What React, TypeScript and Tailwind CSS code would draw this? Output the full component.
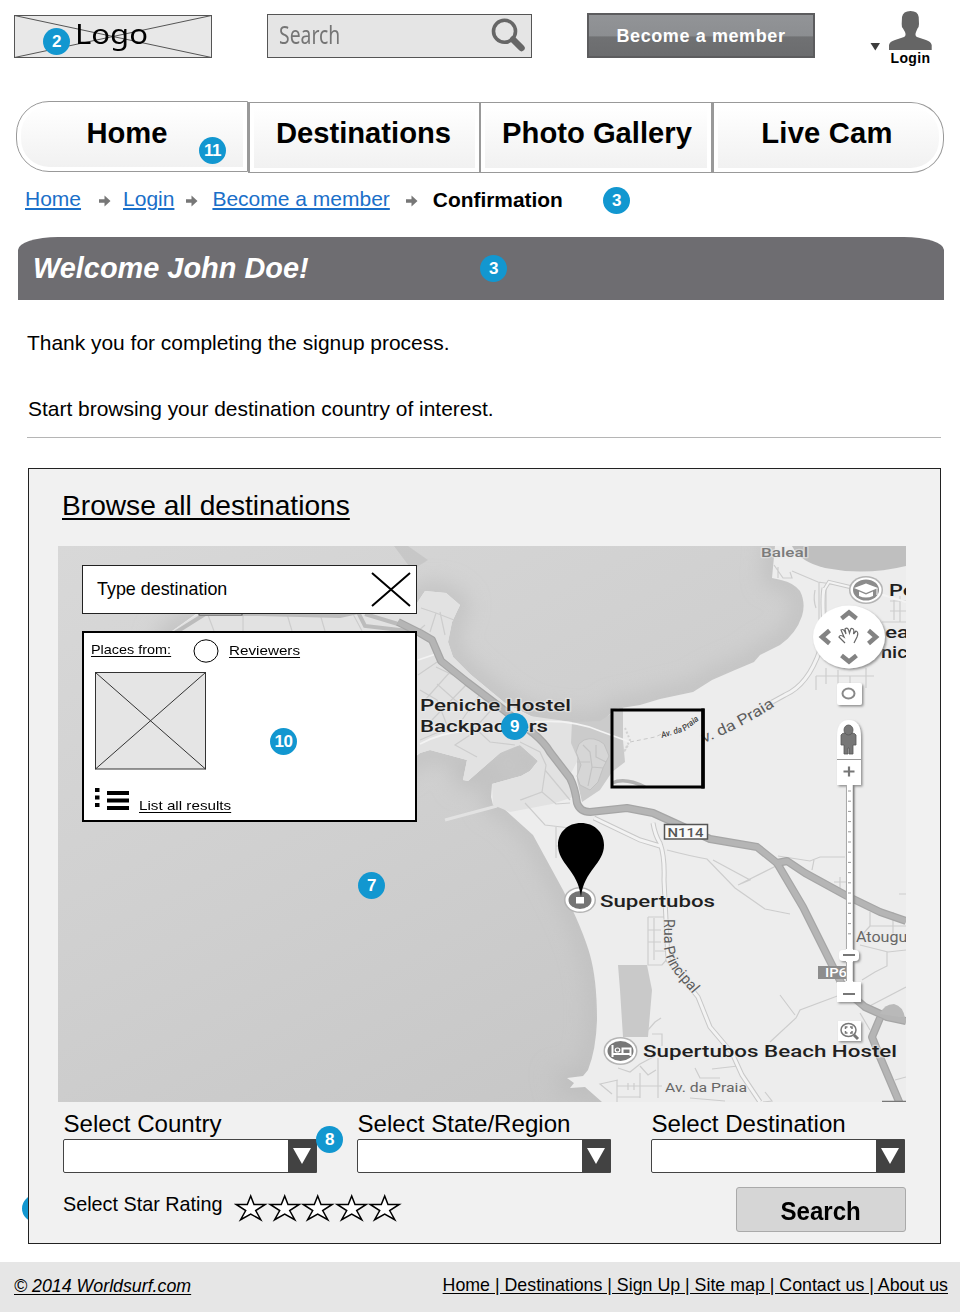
import React from "react";

function Badge({ n, className }: { n?: string; className: string }) {
  return (
    <span
      className={`absolute flex h-[27px] w-[27px] items-center justify-center rounded-full bg-[#1297d0] text-[17px] font-bold leading-none tracking-[-0.5px] text-white ${className}`}
    >
      {n}
    </span>
  );
}

function Header() {
  return (
    <header className="flex h-[101px] items-start">
      <div className="relative ml-[14px] mt-[15px] h-[43px] w-[198px] bg-[#e8e8e8]">
        <svg className="absolute inset-0" width="198" height="43" fill="none" stroke="#555" strokeWidth="1">
          <rect x="0.5" y="0.5" width="197" height="42" />
          <path d="M0.5 0.5L197.5 42.5M0.5 42.5L197.5 0.5" />
        </svg>
        <span className="absolute left-[61px] top-[1px] origin-left scale-x-[1.15] font-['Noto_Sans',sans-serif] text-[27px] leading-[36px] text-black">
          Logo
        </span>
        <Badge n="2" className="left-[29px] top-[13px]" />
      </div>
      <div className="ml-[55px] mt-[14px] flex h-[44px] w-[265px] items-center justify-between border border-[#555] bg-[#e5e5e5] pl-[11px] pr-[5px]">
        <span className="origin-left scale-x-[0.79] pb-[3px] font-['Noto_Sans',sans-serif] text-[24.5px] leading-[38px] text-[#757575]">
          Search
        </span>
        <svg width="36" height="36" viewBox="0 0 36 36" fill="none" stroke="#666">
          <circle cx="14.5" cy="13.3" r="11" strokeWidth="3.6" />
          <path d="M23 21.5L31.5 30" strokeWidth="6.5" strokeLinecap="round" />
        </svg>
      </div>
      <button className="ml-[55px] mt-[13px] h-[45px] w-[228px] border-2 border-[#5c5c5e] bg-[linear-gradient(#929497_0%,#8c8e91_50%,#707173_54%,#6b6c6e_100%)] pt-[2px] text-[18px] font-bold leading-[39px] tracking-[0.6px] text-white">
        Become a member
      </button>
      <div className="ml-[55px] mt-[11px] flex items-start">
        <svg className="mt-[32px]" width="11" height="8">
          <path d="M0.5 0H10L5.3 7.5Z" fill="#3d3d3d" />
        </svg>
        <div className="ml-[8px] flex w-[43px] flex-col items-center">
          <svg width="43" height="39" fill="#656565">
            <path d="M0 39V34Q0.5 30.5 6 29L15 26Q17.5 24.5 16 21L14 17.500Q12.500 16 12.700 13L13 6Q14 0 21.500 0Q29 0 29.700 6L30 13Q30 16 28.500 17.500L27 21Q25.500 24.500 28 26L37 29Q42 30.500 42.700 34V39Z" />
          </svg>
          <span className="text-[14px] font-bold leading-[16px] tracking-[0.4px] text-black">Login</span>
        </div>
      </div>
    </header>
  );
}

function Nav() {
  const inner = "flex h-full w-full justify-center bg-linear-to-b from-white to-[#f1f1f1] text-[29.2px] font-bold leading-[29px] text-black";
  return (
    <nav className="relative ml-[16px] flex h-[72px] w-[928px]">
      <a className="h-[71px] w-[232px] rounded-l-[33px] border border-[#999] p-[4px]">
        <span className={`${inner} rounded-l-[28px] pl-0 pr-[10px] pt-[13px]`}>Home</span>
      </a>
      <a className="mt-px h-[71px] w-[232px] border border-l-2 border-[#999] p-[4px]">
        <span className={`${inner} pr-[2px] pt-[12px]`}>Destinations</span>
      </a>
      <a className="mt-px h-[71px] w-[232px] border border-[#999] p-[4px]">
        <span className={`${inner} whitespace-nowrap pl-[2px] pt-[12px]`}>Photo Gallery</span>
      </a>
      <a className="mt-px h-[71px] w-[232px] rounded-r-[33px] border border-l-2 border-[#999] p-[4px]">
        <span className={`${inner} rounded-r-[28px] pr-[3px] pt-[12px]`}>
          <span className="whitespace-nowrap tracking-[0.2px]">Live Cam</span>
        </span>
      </a>
      <Badge n="11" className="left-[183px] top-[36px]" />
    </nav>
  );
}

function Arrow({ className }: { className: string }) {
  return (
    <svg className={className} width="12" height="12" fill="#777">
      <path d="M0 4.300H5.500V0.500L11.500 6L5.500 11.500V7.800H0Z" />
    </svg>
  );
}

function Breadcrumb() {
  const link = "text-[#1a6fc9] underline decoration-[1.5px] underline-offset-[2px]";
  return (
    <div className="relative mt-[14px] flex h-[50px] items-start pl-[25px] text-[21px] leading-[24px]">
      <a className={link}>Home</a>
      <Arrow className="ml-[18px] mt-[8px]" />
      <a className={`${link} ml-[12px]`}>Login</a>
      <Arrow className="ml-[12px] mt-[8px]" />
      <a className={`${link} ml-[14px]`}>Become a member</a>
      <Arrow className="ml-[16px] mt-[8px]" />
      <span className="ml-[15px] mt-px text-[20.900px] font-bold text-black">Confirmation</span>
      <Badge n="3" className="left-[603px] top-0" />
    </div>
  );
}

const HALO = {
  paintOrder: "stroke" as const,
  stroke: "#ececec",
  strokeOpacity: 0.55,
  strokeWidth: 2.5,
  strokeLinejoin: "round" as const,
};

function Label({ x, y, w, size = 16, weight = 500, fill = "#1f1f1f", children }: {
  x: number; y: number; w: number; size?: number; weight?: number; fill?: string; children: string;
}) {
  return (
    <text x={x} y={y} textLength={w} lengthAdjust="spacingAndGlyphs" fontSize={size} fontWeight={weight} fill={fill} {...HALO}>
      {children}
    </text>
  );
}

function MapDrawing() {
  const ticks = Array.from({ length: 15 }, (_, i) => 791 + i * 10.2);
  return (
    <svg className="absolute inset-0 font-[Roboto,sans-serif]" width="848" height="556" viewBox="58 546 848 556">
      <defs>
        <linearGradient id="sea" x1="0" y1="0" x2="0.8" y2="1">
          <stop offset="0" stopColor="#d8d8d8" />
          <stop offset="0.5" stopColor="#cfcfcf" />
          <stop offset="1" stopColor="#c5c5c5" />
        </linearGradient>
        <filter id="soft" x="-10%" y="-10%" width="120%" height="120%"><feGaussianBlur stdDeviation="11" /></filter>
        <filter id="shadow" x="-20%" y="-20%" width="150%" height="150%">
          <feDropShadow dx="1.5" dy="1.5" stdDeviation="0.8" floodColor="#777" floodOpacity="0.8" />
        </filter>
        <path id="land" d="M775 546L772 578L781 580Q794 583 800 591Q806 603 802 616Q796 634 780 645L760 655L754 662L735 670L712 680L693 692L660 699L640 705L615 709L600 724L572 722L535 718L505 703L470 674L453 657L448 642L452 622L460 605L446 593L425 591L415 606L400 602L380 609L340 613L200 611L165 636L400 770L420 753L430 750L467 760L463 780L468 781L500 753L510 747L520 745L538 761L530 771L521 776L492 784L491 797L493 805L503 808L533 835L563 890Q583 930 590 955Q597 980 597 1020Q596 1050 588 1070L583 1076L567 1078L574 1083L570 1088L585 1087L602 1102H906V546Z" />
      </defs>
      <rect x="58" y="546" width="848" height="556" fill="url(#sea)" />
      <use href="#land" fill="none" stroke="#bdbdbd" strokeWidth="14" filter="url(#soft)" />
      <path d="M394 546L412 570L428 560L408 546Z" fill="#c2c2c2" opacity="0.7" />
      <use href="#land" fill="#ededed" />
      <path d="M200 612L165 636L400 765L420 753L430 750L467 760L463 780L468 781L500 753L520 745L538 761L530 771L521 776L492 784L493 805L510 812L552 804L576 796L570 775L578 760L572 722L530 716L505 703L470 674L453 657L448 642L452 622L460 605L446 593L425 591L415 606L400 602L380 609L340 613Z" fill="#e2e2e2" />
      <path d="M792 546Q800 562 825 568Q865 576 906 566V546Z" fill="#bfbfbf" />
      <path d="M572 722L600 721L623 706V740L625 762L612 772L600 790L582 802L577 780L577 757L571 743Z" fill="#cbcbcb" />
      <path d="M579 744L584 740Q594 736 604 744L609 756L603 768L598 782L590 790L580 785L577 776L581 765L576 752Z" fill="#d6d6d6" stroke="#c1c1c1" />
      <path d="M583 745L590 752L592 767L588 786M592 767L603 768M577 762H590M596 745V757L606 762" fill="none" stroke="#c3c3c3" strokeWidth="1.200" />
      <path d="M612 783Q625 777 645 787" fill="none" stroke="#b2b2b2" strokeWidth="3.500" />
      <path d="M618 965H647L652 990L648 1037H623L620 990Z" fill="#c9c9c9" />
      <path d="M445 820L497 806" stroke="#e2e2e2" strokeWidth="3" />

      <g fill="none" stroke="#cdcdcd" strokeWidth="1.200">
        <path d="M421 608L436 613L454 620M436 613L430 632M440 612L445 635M425 625L417 632M440 660L418 675M450 672L425 700M467 684L430 722M455 676L436 667M480 694L462 720M437 684L455 700L470 712M420 690L437 700L447 725M493 708L475 728L490 742L515 745M420 740L448 728M470 735L455 745L477 757M520 742L540 752L546 765L542 792L520 800M545 770L570 800M521 800L542 792L556 804L570 803M525 803L545 825L570 828M556 826V858M556 846H562" />
        <path d="M208 615L214 631M243 614V631M287 614L292 631M320 614L325 631M353 614L362 631" />
        <path d="M774 565L783 578H792L790 572M778 567V578M792 571L818 582L846 586M815 590Q813 600 816 608M819 582V622M826 586V612M890 601H906M890 611H906M894 600V620M900 596V622M882 622H906M816 676H874M826 668V684M838 670V690M850 676V686M866 668V688M816 676V690" />
        <path d="M667 850Q690 856 707 859L735 888L765 909L790 914M713 860L750 880L738 885M740 884L776 866M778 856L810 861L820 857H845M812 870L814 860" />
        <path d="M834 882H846M840 877V890M870 912V926H906M893 912V936M870 926L862 935M899 894H906M860 945L888 952L906 950M887 952V966L875 972L862 980M848 992L800 1010L796 1018L770 1042M780 995L795 1015M862 1010L906 987M860 1013L870 1030M895 1080L906 1077M695 1068L700 1078H720M712 1069L738 1066" />
        <path d="M648 917H665M648 917V965H662L668 958M654 918V960M648 930H661M648 942H661M655 951H668M648 1030L655 1022L661 1018M652 1034H662V1046M618 1068L630 1072L640 1064L655 1056M618 1080L600 1084L612 1094M617 1080V1102M640 1073V1098M617 1086H662M628 1083V1090M634 1083V1090M658 1058V1098M617 1097H640M640 1066L648 1075L656 1070M690 1098L725 1101M765 1092L772 1101L763 1102" />
      </g>
      <g fill="none" stroke="#c8c8c8" strokeWidth="5">
        <path d="M653 823Q655 835 660 843Q665 857 664 880L668 960L698 997L710 1027L732 1053L742 1075L760 1102M594 818L640 840L660 846M824 588Q822 600 824 625L820 650Q808 685 785 695L765 706" />
        <path d="M824 590L829 582L850 587" strokeWidth="4" />
      </g>
      <g fill="none" stroke="#f3f3f3" strokeWidth="3">
        <path d="M653 823Q655 835 660 843Q665 857 664 880L668 960L698 997L710 1027L732 1053L742 1075L760 1102M594 818L640 840L660 846M824 588Q822 600 824 625L820 650Q808 685 785 695L765 706" />
        <path d="M824 590L829 582L850 587" strokeWidth="2" />
        <path d="M535 722Q572 719 600 731L630 742M418 660L436 654M420 744Q440 733 465 731" strokeWidth="1.800" />
        <path d="M880 594L906 602" strokeWidth="2" />
      </g>
      <path d="M630 742L655 737L664 733" fill="none" stroke="#c8c8c8" strokeDasharray="4 3" />
      <path d="M625 728L630 740L624 752L628 745" fill="none" stroke="#d2d2d2" strokeDasharray="2 2" strokeWidth="2" />
      <path d="M170 636L205 614H260L340 616L358 612L365 626L417 632M365 614L398 624" fill="none" stroke="#bcbcbc" strokeWidth="4" />
      <g fill="none" stroke="#a6a6a6" strokeWidth="8" strokeLinejoin="round">
        <path d="M398 622L420 633L432 640L441 661L467 682L500 707L533 733Q545 743 550 752L570 778Q575 788 577 803Q580 812 590 812L627 808L653 813L710 839L757 847L777 863L787 861L805 873L847 896L880 912L906 921" />
        <path d="M777 863L803 907L833 967L845 990L865 1007L887 1017L906 1021M880 1018L872 1037L880 1057L900 1104" />
      </g>
      <g fill="none" stroke="#b5b5b5" strokeWidth="5.500" strokeLinejoin="round">
        <path d="M398 622L420 633L432 640L441 661L467 682L500 707L533 733Q545 743 550 752L570 778Q575 788 577 803Q580 812 590 812L627 808L653 813L710 839L757 847L777 863L787 861L805 873L847 896L880 912L906 921" />
        <path d="M777 863L803 907L833 967L845 990L865 1007L887 1017L906 1021M880 1018L872 1037L880 1057L900 1104" />
      </g>
      <path d="M880 1014Q884 1004 894 1004Q903 1006 905 1018Z" fill="#b9b9b9" />
      <path d="M882 1101.500H906" stroke="#777" strokeWidth="1.500" />
      <rect x="199" y="606" width="43" height="9" fill="#fff" stroke="#555" />

      <Label x={761} y={557} w={47} size={13.5} weight={500} fill="#7b7b7b">Baleal</Label>
      <Label x={420} y={710.5} w={151}>Peniche Hostel</Label>
      <Label x={420} y={731.5} w={128}>Backpackers</Label>
      <Label x={600} y={906.5} w={115}>Supertubos</Label>
      <Label x={643} y={1057} w={254}>Supertubos Beach Hostel</Label>
      <Label x={856} y={941.5} w={64} size={14} weight={400} fill="#666">Atouguia</Label>
      <Label x={665} y={1092} w={82} size={12.5} weight={400} fill="#666">Av. da Praia</Label>
      <Label x={889} y={596} w={78}>Peniche</Label>
      <Label x={885} y={637.500} w={30}>eal</Label>
      <Label x={881} y={658} w={38}>nico</Label>
      <path id="praia" d="M704 743Q744 727 778 704" fill="none" />
      <text fontSize="15" fill="#5c5c5c" {...HALO}><textPath href="#praia" textLength="80" lengthAdjust="spacingAndGlyphs">v. da Praia</textPath></text>
      <path id="rua" d="M664 919V948Q667 966 679 978L698 1000" fill="none" />
      <text fontSize="15" fill="#5c5c5c" {...HALO}><textPath href="#rua" textLength="84" lengthAdjust="spacingAndGlyphs">Rua Principal</textPath></text>

      <rect x="664.500" y="824.500" width="43" height="14.500" fill="#fafafa" stroke="#555" strokeWidth="1.500" />
      <text x="667.500" y="836.500" textLength="36" lengthAdjust="spacingAndGlyphs" fontSize="12.500" fontWeight="500" fill="#555">N114</text>
      <rect x="818" y="966" width="32" height="13" fill="#8d8d8d" />
      <text x="825" y="977" textLength="22" lengthAdjust="spacingAndGlyphs" fontSize="12.500" fontWeight="500" fill="#fff">IP6</text>

      <g fill="#fff">
        <ellipse cx="866" cy="590" rx="17" ry="14" fill="#b4b4b4" />
        <ellipse cx="866" cy="590" rx="15.500" ry="12.500" />
        <ellipse cx="866" cy="590" rx="13" ry="10.500" fill="#8c8c8c" />
        <path d="M854 588L866 583.500L878 588L866 593ZM859 591.500L866 594.500L873 591.500V596Q866 599 859 596Z" />
        <path d="M877 588V595" stroke="#fff" />
        <ellipse cx="580" cy="900" rx="16" ry="13" fill="#b4b4b4" />
        <ellipse cx="580" cy="900" rx="14.500" ry="11.500" />
        <ellipse cx="580" cy="900" rx="11.500" ry="9" fill="#757575" />
        <rect x="576" y="897" width="8" height="6.500" />
        <ellipse cx="620.500" cy="1051" rx="17" ry="14" fill="#b4b4b4" />
        <ellipse cx="620.500" cy="1051" rx="15.500" ry="12.500" />
        <ellipse cx="620.500" cy="1051" rx="13" ry="10" fill="#787878" />
        <path d="M612.500 1045V1057M612.500 1054H630.500V1056M630.500 1054V1048.500H622.500V1053" fill="none" stroke="#fff" strokeWidth="2" />
        <ellipse cx="617.500" cy="1050" rx="2.300" ry="2" fill="none" stroke="#fff" strokeWidth="1.200" />
      </g>
      <path d="M581 823C568 823 558 832 558 845C558 864 578 870 581 897C584 870 604 864 604 845C604 832 594 823 581 823Z" />

      <g filter="url(#shadow)" fill="#fff">
        <ellipse cx="849" cy="637" rx="36" ry="31.500" />
        <rect x="837" y="683" width="25" height="22" rx="2" />
        <path d="M837 760V737Q837 720 849 720Q861 720 861 737V785H837Z" />
        <rect x="846" y="785" width="7" height="198" />
        <rect x="839" y="950" width="20" height="11" rx="4" />
        <rect x="837" y="982" width="24" height="20" />
        <rect x="838" y="1021" width="23" height="20" />
      </g>
      <path d="M841.500 618.500L849 612.500L856.500 618.500M841.500 655.500L849 661.500L856.500 655.500M829.500 630.500L822 637L829.500 643.500M868.500 630.500L876 637L868.500 643.500" fill="none" stroke="#838383" strokeWidth="4.500" />
      <path d="M845 643L839 637Q840 634 844 637L841 630Q844 628 846 634L845 629Q848 626 849.500 633L851 628.500Q855 628 853.500 634L856 631Q859 632 857 637L854 643" fill="#fff" stroke="#666" strokeWidth="1.200" />
      <ellipse cx="848.500" cy="693.500" rx="6" ry="5" fill="none" stroke="#888" strokeWidth="2" />
      <path d="M837 759.500H861" stroke="#999" />
      <g fill="#777" stroke="#555" strokeWidth="0.800">
        <path d="M841 735Q842 733 845 733H852Q855 733 856 735V745H853V754H849V748H848V754H844V745H841Z" />
        <ellipse cx="848.500" cy="730" rx="4.500" ry="5" />
      </g>
      <path d="M843.500 771.500H854.500M849 766.500V776.500M843 994H855" stroke="#777" strokeWidth="2.200" />
      <path d="M843 955H855" stroke="#777" strokeWidth="2" />
      {ticks.map((t) => <path key={t} d={`M848 ${t}h3`} stroke="#999" />)}
      <path d="M846.500 785V949M846.500 962V981" stroke="#aaa" />
      <path d="M853.500 785V949M853.500 962V981" stroke="#888" strokeWidth="1.500" />
      <g fill="none" stroke="#777" strokeWidth="1.500">
        <ellipse cx="848.500" cy="1030" rx="7.500" ry="6.500" />
        <path d="M845.500 1029V1027H847.500M850 1027H852V1029M852 1031V1033H850M847.500 1033H845.500V1031" />
        <path d="M854 1035L858 1039" strokeWidth="3" />
      </g>

      <path d="M612 710H703V787H612Z" fill="none" stroke="#000" strokeWidth="3" />
      <path d="M703 708.500V788.500" stroke="#000" strokeWidth="3.500" />
      <path id="praia2" d="M662 738L685 731L703 717" fill="none" />
      <text fontSize="8.500" fontStyle="italic" fontWeight="500" fill="#444"><textPath href="#praia2" textLength="42" lengthAdjust="spacingAndGlyphs">Av. da Praia</textPath></text>
    </svg>
  );
}

function MapPanel() {
  const text = "origin-left whitespace-nowrap text-[13.5px] leading-[16px] underline underline-offset-[2px]";
  return (
    <div className="relative ml-[29px] h-[556px] w-[848px] overflow-hidden">
      <MapDrawing />
      <div className="absolute left-[24px] top-[19px] flex h-[49px] w-[335px] items-center justify-between border-[1.5px] border-[#222] bg-white pl-[14px] pr-[5px] text-[17.9px]">
        <span>Type destination</span>
        <svg width="40" height="36" stroke="#000" strokeWidth="2">
          <path d="M1 1L39 34M39 1L1 34" />
        </svg>
      </div>
      <div className="absolute left-[24px] top-[85px] h-[191px] w-[335px] border-2 border-black bg-white pl-[7px] pt-[5px]">
        <div className="flex h-[26px] items-start">
          <span className={`${text} mt-[4px] w-[103px] scale-x-[1.068]`}>Places from:</span>
          <svg className="ml-[-1px]" width="26" height="25" fill="none" stroke="#000">
            <ellipse cx="13" cy="13" rx="12" ry="11.200" />
          </svg>
          <span className={`${text} ml-[10px] mt-[5px] scale-x-[1.127]`}>Reviewers</span>
        </div>
        <svg className="ml-[4px] mt-[8px]" width="111" height="98" fill="#e5e5e5" stroke="#333">
          <rect x="0.500" y="0.500" width="110" height="96.500" />
          <path d="M0.500 0.500L110.500 97M110.500 0.500L0.500 97" />
        </svg>
        <div className="mt-[17px] flex items-start">
          <svg className="ml-[4px]" width="36" height="24">
            <path d="M0 1h4.500v4h-4.500zM0 8.500h4.500v4h-4.500zM0 16h4.500v4h-4.500zM12 4h22v4h-22zM12 11.500h22v4h-22zM12 19h22v4h-22z" />
          </svg>
          <span className={`${text} ml-[8px] mt-[11px] scale-x-[1.127]`}>List all results</span>
        </div>
      </div>
      <Badge n="10" className="left-[212px] top-[182px]" />
      <Badge n="9" className="left-[443px] top-[167px]" />
      <Badge n="7" className="left-[300px] top-[326px]" />
    </div>
  );
}

function SelectField({ label }: { label: string }) {
  return (
    <label className="block w-[254px]">
      <span className="block h-[30px] whitespace-nowrap pl-[0.5px] text-[24.1px] leading-[29px]">{label}</span>
      <span className="flex h-[34px] justify-end rounded-l-[2px] border border-[#444] bg-white">
        <span className="flex w-[28px] items-center justify-center bg-[#424242]">
          <svg width="18" height="16" fill="#fff"><path d="M0 0H18L9 16Z" /></svg>
        </span>
      </span>
    </label>
  );
}

function Browse() {
  return (
    <section className="relative ml-[28px] mt-[30px] h-[776px] w-[913px] border border-[#222] bg-[#f1f1f1] text-black">
      <h2 className="flex h-[77px] items-start pl-[33px] pt-[21px] text-[28.150px] leading-[32px]">
        <span className="underline decoration-2 underline-offset-[3px]">Browse all destinations</span>
      </h2>
      <MapPanel />
      <div className="ml-[34px] mt-[7px] flex gap-[40px]">
        <SelectField label="Select Country" />
        <SelectField label="Select State/Region" />
        <SelectField label="Select Destination" />
      </div>
      <div className="flex items-start pl-[34px] pt-[14px]">
        <span className="mt-[5px] w-[171px] whitespace-nowrap text-[19.8px] leading-[24px]">Select Star Rating</span>
        <div className="mt-[7px] flex">
          {[0, 1, 2, 3, 4].map((i) => (
            <svg key={i} width="33.600" height="28" viewBox="-1 -1 33.600 28" fill="#fff" stroke="#000" strokeWidth="1.500">
              <path d="M15.700 1L19 9.500H30.200L20.700 15.500L25.800 24.700L15.700 19L5.600 24.700L10.700 15.500L1.200 9.500H12.300Z" />
            </svg>
          ))}
        </div>
        <button className="ml-auto mr-[34px] h-[45px] w-[170px] rounded-[3px] border border-[#aaa] bg-[#d6d6d6] text-[25.6px] font-bold leading-[47px]">
          <span className="inline-block scale-x-[0.94]">Search</span>
        </button>
      </div>
      <Badge n="8" className="left-[287px] top-[657px]" />
    </section>
  );
}

export default function App() {
  return (
    <div className="relative isolate flex h-[1312px] w-[960px] flex-col overflow-hidden bg-white font-['Liberation_Sans',Arial,sans-serif] text-black">
      <Header />
      <Nav />
      <Breadcrumb />
      <div className="relative ml-[18px] h-[63px] w-[926px] bg-[#6e6d71] pl-[15px] text-[28.900px] font-bold italic leading-[63px] text-white [border-top-left-radius:40px_13px] [border-top-right-radius:40px_13px]">
        Welcome John Doe!
        <Badge n="3" className="left-[462px] top-[18px] not-italic" />
      </div>
      <div className="ml-[27px] h-[138px] w-[914px] border-b border-[#b5b5b5] pt-[31px] text-[20.950px] leading-[24px]">
        <p>Thank you for completing the signup process.</p>
        <p className="ml-px mt-[42px]">Start browsing your destination country of interest.</p>
      </div>
      <Browse />
      <Badge className="left-[22px] top-[1195px] -z-10" />
      <footer className="mt-[18px] flex h-[50px] items-start justify-between bg-[#e6e6e6] pl-[14px] pr-[12px] pt-[11px] text-[17.8px] leading-[24px]">
        <span className="pt-px italic underline underline-offset-[2px]">© 2014 Worldsurf.com</span>
        <span className="underline underline-offset-[2px]">Home | Destinations | Sign Up | Site map | Contact us | About us</span>
      </footer>
    </div>
  );
}
